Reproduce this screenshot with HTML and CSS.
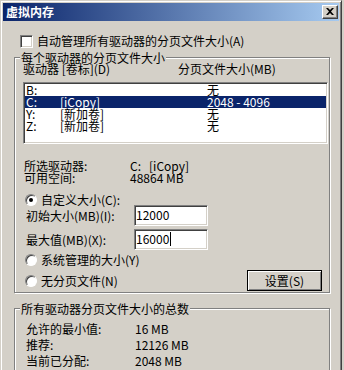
FILE: index.html
```html
<!DOCTYPE html>
<html>
	<head>
		<meta charset="utf-8">
		<title>虚拟内存</title>
		<link rel="stylesheet" href="styles.css">
	</head>
	<body>
		<div class="window">
			<div class="titlebar">
				<span class="title">虚拟内存</span>
				<span class="close">
					<svg width="8" height="7" viewBox="0 0 8 7"><path d="M0 0h2l2 2 2-2h2L5 3.5 8 7H6L4 5 2 7H0l3-3.5z" fill="#000"/></svg>
				</span>
			</div>
			<div class="content">
				<div class="check-row"><span class="checkbox"></span>自动管理所有驱动器的分页文件大小(A)</div>

				<fieldset class="group">
					<legend>每个驱动器的分页文件大小</legend>
					<div class="list-head"><span>驱动器 [卷标](D)</span><span>分页文件大小(MB)</span></div>
					<div class="listbox">
						<div class="list-row"><span>B:</span><span></span><span>无</span></div>
						<div class="list-row selected"><span>C:</span><span>[iCopy]</span><span>2048 - 4096</span></div>
						<div class="list-row"><span>Y:</span><span>[新加卷]</span><span>无</span></div>
						<div class="list-row"><span>Z:</span><span>[新加卷]</span><span>无</span></div>
					</div>
					<div class="info">
						<div class="info-row"><span>所选驱动器:</span><span>C:&nbsp;&nbsp;&nbsp;[iCopy]</span></div>
						<div class="info-row"><span>可用空间:</span><span>48864 MB</span></div>
					</div>
					<div class="radio-row first"><span class="radio checked"></span>自定义大小(C):</div>
					<div class="field-row"><span class="field-label">初始大小(MB)(I):</span><div class="textbox">12000</div></div>
					<div class="field-row second"><span class="field-label">最大值(MB)(X):</span><div class="textbox">16000<span class="caret"></span></div></div>
					<div class="radio-row system"><span class="radio"></span>系统管理的大小(Y)</div>
					<div class="last-row">
						<div class="radio-row"><span class="radio"></span>无分页文件(N)</div>
						<div class="button">设置(S)</div>
					</div>
				</fieldset>

				<fieldset class="group totals">
					<legend>所有驱动器分页文件大小的总数</legend>
					<div class="total-row"><span>允许的最小值:</span><span>16 MB</span></div>
					<div class="total-row"><span>推荐:</span><span>12126 MB</span></div>
					<div class="total-row"><span>当前已分配:</span><span>2048 MB</span></div>
				</fieldset>
			</div>
		</div>
	</body>
</html>
```

FILE: styles.css
```css
html,body{
	margin:0;
	height:100%;
	overflow:hidden;
	background:#D4D0C8;
}

body{
	font-family:"Noto Sans CJK SC",sans-serif;
	font-size:12px;
	color:#000;
}

.window{
	width:342px;
	height:400px;
	box-sizing:border-box;
	border:1px solid;
	border-color:#D4D0C8 #404040 #404040 #D4D0C8;
	box-shadow:inset 1px 1px 0 #fff,inset -1px -1px 0 #808080;
	padding:2px;
}

.titlebar{
	height:18px;
	display:flex;
	align-items:center;
	justify-content:space-between;
	padding-left:3px;
	background:linear-gradient(to right,#0A246A,#A6CAF0);
}

.title{
	color:#FFF;
	font-weight:bold;
	line-height:18px;
}

.close{
	width:16px;
	height:14px;
	box-sizing:border-box;
	margin-right:1px;
	background:#D4D0C8;
	border:1px solid;
	border-color:#FFF #404040 #404040 #FFF;
	box-shadow:inset -1px -1px 0 #808080;
	display:flex;
	align-items:center;
	justify-content:center;
}

.close svg{
	display:block;
	margin-top:-1px;
}

.check-row{
	display:flex;
	align-items:center;
	height:14px;
	line-height:14px;
	margin:13px 0 0 17px;
}

.checkbox{
	width:13px;
	height:13px;
	box-sizing:border-box;
	margin-right:4px;
	background:#FFF;
	border:1px solid;
	border-color:#808080 #FFF #FFF #808080;
	box-shadow:inset 1px 1px 0 #404040,inset -1px -1px 0 #D4D0C8;
}

.group{
	width:316px;
	box-sizing:border-box;
	min-width:0;
	margin:3px 0 0 11px;
	padding:0 0 1px 5px;
	border:1px solid #808080;
	box-shadow:1px 1px 0 #FFF,inset 1px 1px 0 #FFF;
}

.group legend{
	padding:0 1px;
	line-height:13px;
	background:#D4D0C8;
}

.list-head{
	display:grid;
	grid-template-columns:155px auto;
	line-height:12px;
	margin:-1px 0 0 3px;
}

.listbox{
	width:305px;
	height:62px;
	box-sizing:border-box;
	margin:7px 0 0 3px;
	padding:1px;
	background:#FFF;
	border:1px solid;
	border-color:#808080 #FFF #FFF #808080;
	box-shadow:inset 1px 1px 0 #404040,inset -1px -1px 0 #D4D0C8;
}

.list-row{
	display:grid;
	grid-template-columns:34px 147px auto;
	line-height:12px;
	padding-left:1px;
}

.list-row.selected{
	background:#0A246A;
	color:#FFF;
}

.info{
	margin:16px 0 0 4px;
}

.info-row{
	display:grid;
	grid-template-columns:106px auto;
	line-height:12px;
}

.radio-row{
	display:flex;
	align-items:center;
	line-height:12px;
	margin-left:5px;
}

.radio-row.first{
	margin-top:10px;
}

.radio-row.system{
	margin-top:4px;
}

.radio{
	position:relative;
	width:12px;
	height:12px;
	box-sizing:border-box;
	margin-right:4px;
	border-radius:50%;
	background:#FFF;
	border:1px solid;
	border-color:#808080 #FFF #FFF #808080;
	box-shadow:inset 1px 1px 0 #404040;
}

.radio.checked::after{
	content:"";
	position:absolute;
	left:3px;
	top:3px;
	width:4px;
	height:4px;
	border-radius:50%;
	background:#000;
}

.field-row{
	display:flex;
	align-items:center;
	margin:-1px 0 0 6px;
}

.field-row.second{
	margin-top:3px;
}

.field-label{
	width:108px;
}

.textbox{
	display:flex;
	align-items:center;
	width:74px;
	height:21px;
	box-sizing:border-box;
	padding:0 0 1px 1px;
	line-height:14px;
	background:#FFF;
	border:1px solid;
	border-color:#808080 #FFF #FFF #808080;
	box-shadow:inset 1px 1px 0 #404040,inset -1px -1px 0 #D4D0C8;
}

.caret{
	width:1px;
	height:14px;
	margin-left:1px;
	background:#000;
}

.last-row{
	display:flex;
	align-items:center;
	justify-content:space-between;
	margin-top:4px;
	padding-right:7px;
}

.last-row .radio-row{
	margin-left:5px;
}

.button{
	width:75px;
	height:21px;
	box-sizing:border-box;
	border:1px solid #000;
	box-shadow:inset 1px 1px 0 #FFF,inset -1px -1px 0 #808080;
	text-align:center;
	line-height:19px;
}

.totals{
	margin-top:9px;
	padding-top:6px;
}

.total-row{
	display:grid;
	grid-template-columns:109px auto;
	line-height:16px;
	margin-left:6px;
}
```
